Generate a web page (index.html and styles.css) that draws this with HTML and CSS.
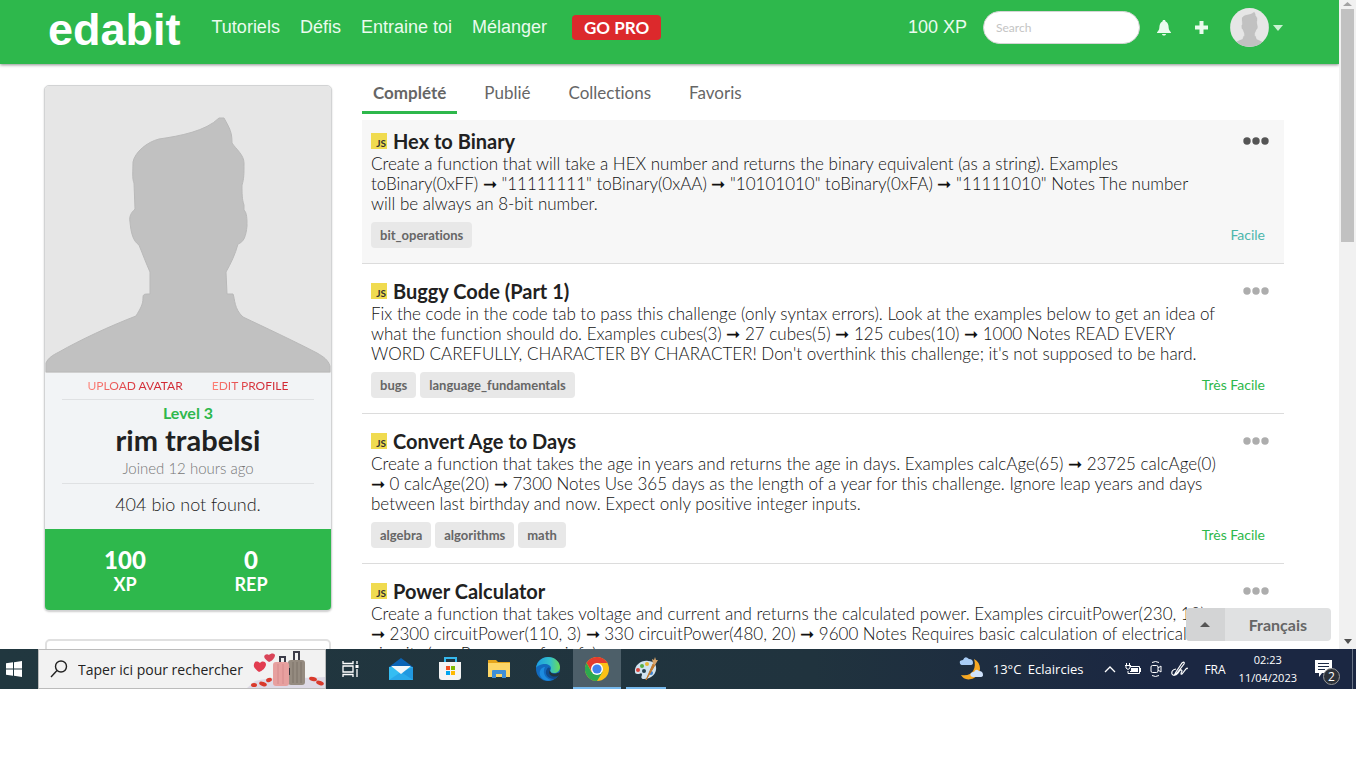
FILE: index.html
```html
<!DOCTYPE html>
<html lang="fr">
<head>
<meta charset="utf-8">
<title>edabit</title>
<link rel="stylesheet" href="styles.css">
</head>
<body>
<svg class="defs" aria-hidden="true">
  <symbol id="person" viewBox="0 0 286 287">
    <rect width="286" height="287" fill="#e6e6e6"/>
    <path d="M1 286V277C3 272 8 269 14 266C35 254 65 240 91 230C95 223 98 219 98 212C98 208 99 208 105 208V186C101 177 98 169 94 159C88 155 86 147 85 136C84 130 86 127 90 123L89 97C87 93 88 84 88 76C90 66 102 56 114 53C135 50 161 45 174 32H179C185 43 187 46 187 57C191 63 199 69 199 77C199 88 199 93 197 99C197 108 197 113 199 119V124C202 127 202 133 202 140C201 150 199 156 193 158C190 169 186 177 181 186L182 208H188C190 213 189 223 198 231C219 241 249 255 272 267C279 271 283 274 285 280V286Z" fill="#c1c1c1" stroke="#b9b9b9"/>
  </symbol>
  <symbol id="dots" viewBox="0 0 26 8"><circle cx="4" cy="4" r="3.700"/><circle cx="13" cy="4" r="3.700"/><circle cx="22" cy="4" r="3.700"/></symbol>
</svg>

<div class="browser">
  <div class="page">
    <header class="topbar">
      <a class="logo" href="#">edabit</a>
      <nav class="nav">
        <a href="#">Tutoriels</a><a href="#">Défis</a><a href="#">Entraine toi</a><a href="#">Mélanger</a>
      </nav>
      <button class="gopro">GO PRO</button>
      <span class="xp">100 XP</span>
      <input class="search" type="text" placeholder="Search" aria-label="Search">
      <button class="icon-btn bell" aria-label="Notifications"><svg width="14" height="17" viewBox="0 0 14 17"><path d="M6 1h2l.6 1.5C11 3.500 11.500 6 11.700 9c.1 2 1 2.800 2.300 4.500V14H0v-.5C1.300 11.800 2.200 11 2.300 9 2.500 6 3 3.500 5.400 2.500ZM5 15h4c-.3 2-3.700 2-4 0Z" fill="currentColor"/></svg></button>
      <button class="icon-btn plus" aria-label="Créer"><svg width="15" height="15" viewBox="0 0 15 15"><path d="M5.500 1h4v4.500H14v4H9.500V14h-4V9.500H1v-4h4.500Z" fill="currentColor"/></svg></button>
      <button class="icon-btn account" aria-label="Compte"><svg class="mini" viewBox="0 0 286 287"><use href="#person"/></svg><svg width="10" height="6" viewBox="0 0 10 6"><path d="M0 0h10L5 6Z" fill="#c9f2d2"/></svg></button>
    </header>

    <div class="columns">
      <aside class="side">
        <section class="profile">
          <svg class="portrait" viewBox="0 0 286 287"><use href="#person"/></svg>
          <div class="about">
            <div class="links"><a href="#">UPLOAD AVATAR</a><a href="#">EDIT PROFILE</a></div>
            <div class="who">
              <p class="level">Level 3</p>
              <h1>rim trabelsi</h1>
              <p class="joined">Joined 12 hours ago</p>
            </div>
            <p class="bio">404 bio not found.</p>
          </div>
          <div class="stats">
            <div><b>100</b><span>XP</span></div>
            <div><b>0</b><span>REP</span></div>
          </div>
        </section>
        <section class="panel"></section>
      </aside>

      <main class="main">
        <nav class="tabs">
          <a class="on" href="#">Complété</a><a href="#">Publié</a><a href="#">Collections</a><a href="#">Favoris</a>
        </nav>
        <article class="card first">
          <div class="head"><span class="js">JS</span><h2>Hex to Binary</h2><button class="more" aria-label="Options"><svg width="26" height="8"><use href="#dots"/></svg></button></div>
          <p class="desc">Create a function that will take a HEX number and returns the binary equivalent (as a string). Examples<br>toBinary(0xFF) ➞ "11111111" toBinary(0xAA) ➞ "10101010" toBinary(0xFA) ➞ "11111010" Notes The number<br>will be always an 8-bit number.</p>
          <div class="foot"><span class="tag">bit_operations</span><span class="rank easy">Facile</span></div>
        </article>
        <article class="card">
          <div class="head"><span class="js">JS</span><h2>Buggy Code (Part 1)</h2><button class="more" aria-label="Options"><svg width="26" height="8"><use href="#dots"/></svg></button></div>
          <p class="desc">Fix the code in the code tab to pass this challenge (only syntax errors). Look at the examples below to get an idea of<br>what the function should do. Examples cubes(3) ➞ 27 cubes(5) ➞ 125 cubes(10) ➞ 1000 Notes READ EVERY<br>WORD CAREFULLY, CHARACTER BY CHARACTER! Don't overthink this challenge; it's not supposed to be hard.</p>
          <div class="foot"><span class="tag">bugs</span><span class="tag">language_fundamentals</span><span class="rank">Très Facile</span></div>
        </article>
        <article class="card">
          <div class="head"><span class="js">JS</span><h2>Convert Age to Days</h2><button class="more" aria-label="Options"><svg width="26" height="8"><use href="#dots"/></svg></button></div>
          <p class="desc">Create a function that takes the age in years and returns the age in days. Examples calcAge(65) ➞ 23725 calcAge(0)<br>➞ 0 calcAge(20) ➞ 7300 Notes Use 365 days as the length of a year for this challenge. Ignore leap years and days<br>between last birthday and now. Expect only positive integer inputs.</p>
          <div class="foot"><span class="tag">algebra</span><span class="tag">algorithms</span><span class="tag">math</span><span class="rank">Très Facile</span></div>
        </article>
        <article class="card">
          <div class="head"><span class="js">JS</span><h2>Power Calculator</h2><button class="more" aria-label="Options"><svg width="26" height="8"><use href="#dots"/></svg></button></div>
          <p class="desc">Create a function that takes voltage and current and returns the calculated power. Examples circuitPower(230, 10)<br>➞ 2300 circuitPower(110, 3) ➞ 330 circuitPower(480, 20) ➞ 9600 Notes Requires basic calculation of electrical<br>circuits (see Resources for info).</p>
        </article>
      </main>
    </div>
    <div class="lang"><button class="up" aria-label="Ouvrir"><svg width="10" height="5" viewBox="0 0 10 5"><path d="M0 5h10L5 0Z" fill="#555"/></svg></button><button class="current">Français</button></div>
  </div>
  <div class="scroll" aria-hidden="true">
    <svg width="9" height="4" viewBox="0 0 9 4"><path d="M0 4h9L4.500 0Z" fill="#a3a3a3"/></svg>
    <i class="thumb"></i>
    <svg width="8" height="5" viewBox="0 0 8 5"><path d="M0 0h8L4 5Z" fill="#505050"/></svg>
  </div>
</div>

<footer class="taskbar">
  <button class="start" aria-label="Démarrer"><svg width="16" height="16" viewBox="0 0 16 16"><path d="M0 2.300 7 1.300V7.500H0ZM8 1.200 16 0V7.500H8ZM0 8.500H7V14.700L0 13.700ZM8 8.500H16V16L8 14.800Z" fill="#fff"/></svg></button>
  <label class="find">
    <svg width="18" height="18" viewBox="0 0 18 18"><circle cx="11" cy="6.500" r="5.500" fill="none" stroke="#222" stroke-width="1.400"/><path d="M7 10.500 1 17" stroke="#222" stroke-width="1.400"/></svg>
    <input type="text" placeholder="Taper ici pour rechercher">
    <svg class="bags" width="78" height="38" viewBox="0 0 78 38">
      <path d="M0 38 8 31C25 26 55 29 78 27V38Z" fill="#dedae6"/>
      <path d="M12 22C8 19 5 16 8 12c2-1 4 0 5 1 2-2 5-2 6 1 0 4-4 7-7 8Z" fill="#e23c50"/>
      <path d="M22 12C18 9 16 7 18 5c1-1 3-1 4 0 2-2 5-2 6 0 0 3-3 6-6 7Z" fill="#d94458"/>
      <path d="M33 13V7h5v6M47 10V2h5v8" fill="none" stroke="#3c3c49" stroke-width="2"/>
      <rect x="41" y="10" width="17" height="25" rx="3" fill="#958b80"/><path d="M46 12v21M50 12v21M54 12v21" stroke="#7d7369"/><path d="M42 18v7" stroke="#33333d" stroke-width="2"/>
      <rect x="26" y="12" width="16" height="24" rx="3" fill="#e7a09f"/><path d="M31 14v20M36 14v20" stroke="#d68a8c"/>
      <g fill="#d93a2c"><ellipse cx="7" cy="35" rx="3" ry="2"/><ellipse cx="16" cy="34" rx="4" ry="2" transform="rotate(20 16 34)"/><ellipse cx="22" cy="30" rx="3" ry="2" transform="rotate(-20 22 30)"/><ellipse cx="66" cy="29" rx="4" ry="2" transform="rotate(15 66 29)"/><ellipse cx="73" cy="33" rx="4" ry="2" transform="rotate(20 73 33)"/></g>
    </svg>
  </label>
  <div class="apps">
    <button class="taskview" aria-label="Affichage des tâches"><svg width="17" height="16" viewBox="0 0 17 16" fill="none" stroke="#fff" stroke-width="1.300"><path d="M1 0v2.500h10V0M1 5h10v6H1ZM1 16v-2.500h10V16M15 0v3M15 8v8"/><path d="M13.500 4h3v3h-3Z" fill="#fff" stroke="none"/></svg></button>
    <button aria-label="Courrier"><svg width="24" height="24" viewBox="0 0 24 24"><path d="M0 10 12 1l12 9v4H0Z" fill="#0b63b5"/><path d="M0 10h24v13H0Z" fill="#35bdf2"/><path d="m10 16 14-6v13Z" fill="#2198e0"/><path d="M0 23 12 15l12 8Z" fill="#2aa9ea"/><path d="M2 9h20l-10 8Z" fill="#f3f6f9"/></svg></button>
    <button aria-label="Store"><svg width="24" height="24" viewBox="0 0 24 24"><path d="M7 6V1h11v5" fill="none" stroke="#35b8ed" stroke-width="2"/><path d="M1 5h22v15q0 3-3 3H4q-3 0-3-3Z" fill="#f4f4f4"/><path d="M8 9h4v4H8Z" fill="#f25022"/><path d="M13 9h4v4h-4Z" fill="#7fba00"/><path d="M8 14h4v4H8Z" fill="#00a4ef"/><path d="M13 14h4v4h-4Z" fill="#ffb900"/></svg></button>
    <button aria-label="Explorateur"><svg width="22" height="20" viewBox="0 0 22 20"><path d="M0 1h8l2 2h12v15H0Z" fill="#e5a51c"/><path d="M0 4h22v14H0Z" fill="#fdd667"/><path d="M4 19v-7q0-1 1-1h12q1 0 1 1v7h-4v-4H8v4Z" fill="#3f8fd8"/></svg></button>
    <button aria-label="Edge"><svg width="24" height="24" viewBox="0 0 24 24"><defs><linearGradient id="eg" x1="0" x2="1"><stop offset="0" stop-color="#1b9de2"/><stop offset=".6" stop-color="#35c1c8"/><stop offset="1" stop-color="#6bdc55"/></linearGradient></defs><circle cx="12" cy="12" r="12" fill="#1269bd"/><path d="M0 11C1 4 6 0 12 0c7 0 12 5 12 10 0 4-3 6-6 6-3 0-4-1-4-2 0-1 1-1 1-3 0-2-3-4-6-4-4 0-8 2-9 4Z" fill="url(#eg)"/><path d="M9 10c-3 5 0 12 7 13-8 3-14-4-12-9 1-3 3-4 5-4Z" fill="#1c8bdf"/><path d="M14 12c-1 4 3 6 8 4l1 2-4 4C11 22 8 16 11 12c1-2 3-2 3 0Z" fill="#114a8b"/><path d="M14 13c0 4 5 5 10 2v2l-2 2c-6 2-11-2-8-6Z" fill="#21353e"/></svg></button>
    <button class="active" aria-label="Chrome"><svg width="24" height="24" viewBox="0 0 24 24"><circle cx="12" cy="12" r="12" fill="#fbc116"/><path d="M1.600 6A12 12 0 0 1 22.400 6H12L7 15Z" fill="#e33b2e"/><path d="M1.600 6A12 12 0 0 0 12 24l5.500-9H6.500Z" fill="#2da94f"/><circle cx="12" cy="12" r="6" fill="#fff"/><circle cx="12" cy="12" r="4.600" fill="#4082ed"/></svg></button>
    <button class="running" aria-label="Paint"><svg width="25" height="24" viewBox="0 0 25 24"><path d="M1 15C0 8 8 3 14 4c6 0 9 4 8 9-1 6-7 9-12 9-3 0-3-2-2-4 0-2-1-2-3-1-2 0-4 0-4-2Z" fill="#cfe2ef"/><circle cx="8" cy="9" r="2" fill="#56ae43"/><circle cx="13" cy="7" r="2" fill="#e8b632"/><circle cx="4" cy="13" r="2" fill="#d9433b"/><circle cx="10" cy="14" r="2" fill="#24404d"/><circle cx="17" cy="16" r="2" fill="#3f82cf"/><path d="m12 23 7-16 2 1Z" fill="#c0792e" stroke="#c0792e"/><path d="m19 7-1-5 2 1 1-3 1 3 2 0-3 5Z" fill="#d9a56b"/></svg></button>
  </div>
  <div class="tray">
    <svg width="25" height="25" viewBox="0 0 25 25"><path d="M15 2c8 4 8 15 0 19-6 3-11 1-13-3 11 2 16-6 13-16Z" fill="#f7a823"/><path d="M4 8Q0 8 1 4q2-1 3-1 2-5 6-1 4 0 4 4 0 2-3 2Z" fill="#a9cdf6"/><path d="M14 20q-4-1-2-4 1-1 3-1 2-4 5-1 4 0 4 4 0 2-3 2Z" fill="#cfe2fb"/></svg>
    <span class="weather">13°C&ensp;Eclaircies</span>
    <svg width="12" height="7" viewBox="0 0 12 7"><path d="m1 6 5-5 5 5" fill="none" stroke="#fff" stroke-width="1.300"/></svg>
    <svg width="16" height="12" viewBox="0 0 16 12"><path d="M5 3.500h9.500v7H3V8M0 2.500h6M1.500 0v2M4.500 0v2M1 3v2q2 3 4 0V3" fill="none" stroke="#fff"/><path d="M6 5h7v4H5V8h1Z" fill="#fff"/><path d="M15 5h1v4h-1Z" fill="#fff"/></svg>
    <svg width="12" height="16" viewBox="0 0 12 16" fill="none" stroke="#fff"><path d="M2 1.500q3.500-2 7 0M2 14.500q3.500 2 7 0"/><rect x="1" y="4.500" width="7" height="7" rx="1.500"/><path d="m8 7 3-2v6L8 9"/></svg>
    <svg width="17" height="16" viewBox="0 0 17 16" fill="none" stroke="#fff" stroke-width="1.200"><path d="m5 11 6-9q3-2 2 1l-7 9-2 1ZM5 8q-5 1-4 5 2 3 6-1 3-5 4-2-2 4 0 3l4-5q2-2 1 0"/></svg>
    <span class="kb">FRA</span>
    <time class="clock">02:23<br>11/04/2023</time>
    <button class="notes" aria-label="Notifications"><svg width="17" height="17" viewBox="0 0 17 17"><path d="M0 0h17v13H7l-3 4v-4H0Z" fill="#fff"/><path d="M3 3.500h11M3 6.500h11M3 9.500h7" stroke="#1c2a44"/></svg><span class="count">2</span></button>
  </div>
</footer>
</body>
</html>
```
FILE: styles.css
```css
* { box-sizing: border-box; }
body {
  margin: 0;
  height: 100vh;
  padding: 0 10px 79px 0;
  display: flex;
  flex-direction: column;
  background: #fff;
  color: #444;
  font-family: Lato, sans-serif;
  font-variant-ligatures: none;
  overflow: hidden;
}
h1, h2, p { margin: 0; }
a { color: inherit; text-decoration: none; }
button { border: 0; padding: 0; background: none; color: inherit; font: inherit; }
svg { display: block; flex: none; }
.defs { position: absolute; width: 0; height: 0; }

.browser { flex: 1; min-height: 0; display: flex; }
.page { flex: 1; min-width: 0; position: relative; overflow: hidden; }

.topbar {
  height: 64px;
  padding: 0 56px 9px 48px;
  display: flex;
  align-items: center;
  background: #2eb84c;
  box-shadow: 0 1px 3px rgba(0, 0, 0, .45);
  color: #eafbee;
  font: 18px "Liberation Sans", Arial, sans-serif;
}
.logo { color: #fff; font-size: 45px; font-weight: bold; line-height: 50px; padding-top: 4px; }
.nav { display: flex; gap: 20px; margin-left: 31px; }
.gopro {
  height: 25px;
  margin-left: 25px;
  padding: 0 12px;
  border-radius: 4px;
  background: #dc292c;
  color: #fff;
  font: bold 17px Lato, sans-serif;
}
.xp { margin-left: auto; }
.search {
  width: 157px;
  height: 33px;
  margin-left: 16px;
  padding: 0 12px;
  border: 1px solid #d5d5d5;
  border-radius: 17px;
  background: #fff;
  font: 12px Lato, sans-serif;
}
.search::placeholder { color: #c4c4c4; }
.icon-btn { display: flex; align-items: center; }
.bell { margin-left: 17px; }
.plus { margin-left: 23px; }
.account { gap: 4px; margin-left: 21px; }
.mini { width: 39px; height: 39px; border-radius: 50%; }

.columns { display: flex; gap: 30px; padding: 21px 55px 0 44px; }
.side { flex: none; width: 288px; }
.profile {
  border: 1px solid #d2d3d4;
  border-radius: 5px;
  overflow: hidden;
  background: #f2f4f6;
  box-shadow: 0 1px 2px rgba(0, 0, 0, .2);
}
.portrait { width: 100%; }
.about { padding: 0 17px; text-align: center; }
.links { display: flex; justify-content: center; gap: 29px; line-height: 26px; font-size: 12px; }
.links a { background: linear-gradient(90deg, #ff8277, #d22a35 60%); -webkit-background-clip: text; background-clip: text; color: transparent; }
.who { padding: 3px 0; border: solid #dfe1e3; border-width: 1px 0; }
.level { color: #2eb84c; font-size: 16px; font-weight: bold; line-height: 20px; }
h1 { color: #212121; font-size: 29px; font-weight: bold; line-height: 33px; }
.joined { color: #777; font-size: 15px; font-weight: 300; line-height: 24px; }
.bio { color: #222; font-size: 18px; font-weight: 300; line-height: 40px; padding-bottom: 5px; }
.stats { display: flex; padding: 16px 17px; background: #2eb84c; color: #fff; text-align: center; font-weight: bold; }
.stats div { flex: 1; }
.stats b { display: block; font-size: 24px; line-height: 29px; }
.stats span { display: block; font-size: 18px; line-height: 20px; }
.panel { height: 200px; margin: 28px 1px 0; border: 2px solid #e0e0e0; border-radius: 5px; }

.main { flex: 1; min-width: 0; }
.tabs { display: flex; gap: 16px; margin-bottom: 6px; }
.tabs a { padding: 0 11px; font-size: 17px; line-height: 16px; height: 29px; color: #666; }
.tabs .on { font-weight: bold; border-bottom: 3px solid #2eb84c; }
.card { padding: 14px 9px 15px; border-bottom: 1px solid #dcdcdc; }
.first { padding-top: 8px; background: #f7f7f7; }
.head { display: flex; align-items: center; height: 26px; }
.js {
  width: 16px;
  height: 16px;
  margin-right: 6px;
  padding-right: 1px;
  background: #f0db4f;
  color: #323330;
  font-size: 10px;
  font-weight: bold;
  line-height: 21px;
  text-align: right;
}
h2 { color: #212121; font-size: 20px; font-weight: bold; line-height: 26px; }
.more { margin: 0 6px 0 auto; fill: #adadad; }
.first .more { fill: #555; }
.desc { color: #111; font-size: 17px; font-weight: 300; line-height: 20px; white-space: nowrap; }
.foot { display: flex; gap: 4px; margin-top: 8px; }
.tag { padding: 0 9px; border-radius: 4px; background: #e8e8e8; color: #666; font-size: 13px; font-weight: bold; line-height: 26px; }
.rank { margin: 0 10px 0 auto; color: #2eb84c; font-size: 14px; line-height: 26px; }
.easy { color: #4db6ac; }

.lang {
  position: absolute;
  right: 8px;
  bottom: 8px;
  display: flex;
  height: 33px;
  border-radius: 4px;
  overflow: hidden;
  background: #e0e1e2;
  color: #666;
  font-size: 16px;
  font-weight: bold;
}
.up { width: 39px; display: flex; align-items: center; justify-content: center; background: #d3d4d5; }
.current { padding: 0 24px; }

.scroll { width: 17px; padding: 2px 0 5px; display: flex; flex-direction: column; align-items: center; background: #f1f1f1; }
.thumb { width: 13px; height: 233px; margin: 3px 0 auto; background: #c1c1c1; }

.taskbar {
  height: 40px;
  display: flex;
  background: linear-gradient(90deg, #21373f, #20333e 60%, #1b2742 85%);
  color: #fff;
  font: 12px "Open Sans", sans-serif;
}
.start { width: 38px; display: flex; align-items: center; padding-left: 6px; }
.find { width: 288px; height: 40px; display: flex; align-items: center; padding-left: 11px; background: #f2f2f2; border: 1px solid #bbb; }
.find input { flex: 1; min-width: 0; border: 0; padding: 0 0 0 10px; background: none; font: 14px "Open Sans", sans-serif; }
.find input::placeholder { color: #222; opacity: 1; }
.apps { display: flex; gap: 1px; }
.apps button { width: 48px; display: flex; align-items: center; justify-content: center; }
.apps .taskview { margin-right: 2px; }
.apps .active { background: #4d5f69; border-bottom: 2px solid #76b9ed; padding-top: 2px; }
.apps .running { width: 40px; margin-left: 4px; border-bottom: 2px solid #76b9ed; padding-top: 2px; }
.tray { display: flex; align-items: center; gap: 9px; margin-left: auto; }
.weather { font-size: 13px; margin-right: 12px; }
.kb { margin: 0 4px 0 7px; }
.clock { text-align: center; font-size: 11px; line-height: 18px; }
.notes { position: relative; padding: 11px 20px 12px 9px; border-right: 1px solid #687384; margin-right: 3px; }
.count {
  position: absolute;
  right: 12px;
  bottom: 4px;
  width: 17px;
  height: 17px;
  border: 1px solid #999;
  border-radius: 50%;
  background: #2c3138;
  line-height: 15px;
}
```
